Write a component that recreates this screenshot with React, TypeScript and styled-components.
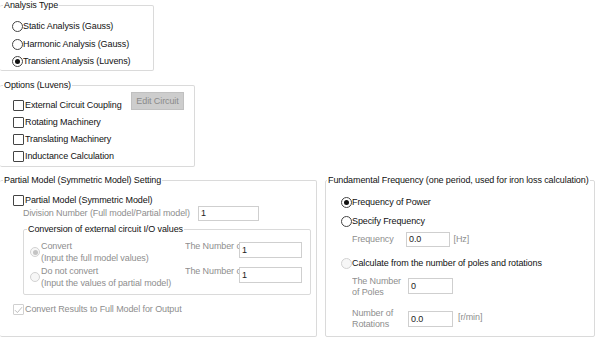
import styled, { createGlobalStyle } from "styled-components";

const GlobalStyle = createGlobalStyle`
  html, body { margin: 0; padding: 0; background: #fff; }
  body {
    font-family: "Liberation Sans", Arial, sans-serif;
    font-size: 9px;
    letter-spacing: -0.1px;
    color: #111;
  }
`;

const Page = styled.div`
  width: 597px;
  height: 338px;
  overflow: hidden;
  display: flex;
  flex-direction: column;
  align-items: flex-start;
`;

type GroupProps = { $w: number; $h: number; $noLeft?: boolean; $mt?: number; $ml?: number };
const Group = styled.fieldset<GroupProps>`
  box-sizing: border-box;
  width: ${p => p.$w}px;
  height: ${p => p.$h}px;
  margin: ${p => p.$mt ?? 0}px 0 0 ${p => p.$ml ?? 0}px;
  padding: 0;
  min-width: 0;
  border: 1px solid #dadada;
  border-left: ${p => (p.$noLeft ? "none" : "1px solid #dadada")};
  border-radius: 2px;
`;

const Legend = styled.legend<{ $ml?: number }>`
  padding: 0 1px;
  margin-left: ${p => p.$ml ?? 3}px;
  line-height: 11px;
  color: #111;
`;

type BodyProps = { $pt: number; $pl: number; $gap?: number };
const Body = styled.div<BodyProps>`
  display: flex;
  flex-direction: column;
  align-items: flex-start;
  padding: ${p => p.$pt}px 0 0 ${p => p.$pl}px;
  gap: ${p => p.$gap ?? 0}px;
`;

const Row = styled.div<{ $mt?: number; $ml?: number; $w?: number }>`
  display: flex;
  align-items: center;
  height: 11px;
  line-height: 11px;
  white-space: nowrap;
  margin: ${p => p.$mt ?? 0}px 0 0 ${p => p.$ml ?? 0}px;
  width: ${p => (p.$w ? `${p.$w}px` : "auto")};
`;

const FieldRow = styled.div<{ $mt?: number; $ml?: number; $h?: number }>`
  display: flex;
  align-items: flex-start;
  height: ${p => p.$h ?? 15}px;
  margin: ${p => p.$mt ?? 0}px 0 0 ${p => p.$ml ?? 0}px;
  white-space: nowrap;
`;

const Radio = styled.span<{ $checked?: boolean; $disabled?: boolean; $size?: number }>`
  box-sizing: border-box;
  flex-shrink: 0;
  position: relative;
  width: ${p => p.$size ?? 11}px;
  height: ${p => p.$size ?? 11}px;
  border-radius: 50%;
  border: 1px solid ${p => (p.$disabled ? "#d2d2d2" : "#444")};
  background: ${p => (p.$disabled ? "#f7f7f7" : "#fff")};
  &::after {
    content: "";
    display: ${p => (p.$checked ? "block" : "none")};
    position: absolute;
    left: 50%;
    top: 50%;
    width: 5px;
    height: 5px;
    margin: -2.5px 0 0 -2.5px;
    border-radius: 50%;
    background: ${p => (p.$disabled ? "#c4c4c4" : "#111")};
  }
`;

const Box = styled.span<{ $disabled?: boolean }>`
  box-sizing: border-box;
  flex-shrink: 0;
  width: 11px;
  height: 11px;
  margin-right: 1px;
  border: 1px solid ${p => (p.$disabled ? "#d0d0d0" : "#444")};
  border-radius: 1px;
  background: #fff;
  display: flex;
  align-items: center;
  justify-content: center;
`;

const Text = styled.span<{ $muted?: boolean }>`
  color: ${p => (p.$muted ? "#8e8e8e" : "#111")};
`;

const FieldLabel = styled.span<{ $w: number; $mt?: number; $lh?: number }>`
  display: block;
  width: ${p => p.$w}px;
  overflow: hidden;
  white-space: nowrap;
  color: #8e8e8e;
  line-height: ${p => p.$lh ?? 11}px;
  margin-top: ${p => p.$mt ?? 0}px;
`;

const Input = styled.div<{ $w: number; $h?: number; $mt?: number }>`
  box-sizing: border-box;
  width: ${p => p.$w}px;
  height: ${p => p.$h ?? 15}px;
  margin-top: ${p => p.$mt ?? 0}px;
  border: 1px solid #cfcfcf;
  background: #fff;
  padding: 0 2px;
  line-height: ${p => (p.$h ?? 15) - 2}px;
  color: #222;
`;

const Unit = styled.span<{ $ml: number; $mt: number }>`
  color: #8e8e8e;
  line-height: 11px;
  margin: ${p => p.$mt}px 0 0 ${p => p.$ml}px;
`;

const EditButton = styled.div`
  box-sizing: border-box;
  align-self: flex-start;
  margin: -7.5px 0 0 auto;
  width: 53px;
  height: 18px;
  background: #cdcdcd;
  border: 1px solid #c0c0c0;
  color: #8a8a8a;
  display: flex;
  align-items: center;
  justify-content: center;
`;

const BottomRow = styled.div`
  display: flex;
  gap: 8px;
  margin-top: 7.5px;
`;

const OptionRow = styled.div<{ $mt?: number }>`
  display: flex;
  align-items: flex-start;
  height: 24px;
  margin-top: ${p => p.$mt ?? 0}px;
  white-space: nowrap;
`;

const OptionChoice = styled.div`
  display: flex;
  align-items: center;
  width: 155px;
  height: 24px;
  gap: 1px;
`;

const TwoLine = styled.span<{ $muted?: boolean }>`
  line-height: 12px;
  color: ${p => (p.$muted ? "#8e8e8e" : "#111")};
`;

const Check = () => (
  <svg width="9" height="8" viewBox="0 0 9 8">
    <path d="M1 4.2 L3.4 6.6 L8 1.2" fill="none" stroke="#bdbdbd" strokeWidth="1" />
  </svg>
);

export default function App() {
  return (
    <>
      <GlobalStyle />
      <Page>
        <Group $w={154} $h={71} $noLeft>
          <Legend>Analysis Type</Legend>
          <Body $pt={10} $pl={12} $gap={6.7}>
            <Row>
              <Radio />
              <Text>Static Analysis (Gauss)</Text>
            </Row>
            <Row>
              <Radio />
              <Text>Harmonic Analysis (Gauss)</Text>
            </Row>
            <Row>
              <Radio $checked />
              <Text>Transient Analysis (Luvens)</Text>
            </Row>
          </Body>
        </Group>

        <Group $w={195} $h={87.5} $noLeft $mt={8.5}>
          <Legend>Options (Luvens)</Legend>
          <Body $pt={9} $pl={13} $gap={6.2}>
            <Row $w={171}>
              <Box />
              <Text>External Circuit Coupling</Text>
              <EditButton>Edit Circuit</EditButton>
            </Row>
            <Row>
              <Box />
              <Text>Rotating Machinery</Text>
            </Row>
            <Row>
              <Box />
              <Text>Translating Machinery</Text>
            </Row>
            <Row>
              <Box />
              <Text>Inductance Calculation</Text>
            </Row>
          </Body>
        </Group>

        <BottomRow>
          <Group $w={317} $h={162.5} $noLeft>
            <Legend>Partial Model (Symmetric Model) Setting</Legend>
            <Body $pt={9.5} $pl={13}>
              <Row>
                <Box />
                <Text>Partial Model (Symmetric Model)</Text>
              </Row>
              <FieldRow $ml={10}>
                <FieldLabel $w={175} $mt={2}>Division Number (Full model/Partial model)</FieldLabel>
                <Input $w={61}>1</Input>
              </FieldRow>
              <Group $w={288} $h={71.5} $mt={2.5} $ml={10}>
                <Legend>Conversion of external circuit I/O values</Legend>
                <Body $pt={5.5} $pl={6}>
                  <OptionRow>
                    <OptionChoice>
                      <Radio $checked $disabled $size={10} />
                      <TwoLine $muted>
                        Convert
                        <br />
                        (Input the full model values)
                      </TwoLine>
                    </OptionChoice>
                    <FieldLabel $w={54} $mt={0.5}>The Number of Circuits</FieldLabel>
                    <Input $w={63} $h={16} $mt={2}>1</Input>
                  </OptionRow>
                  <OptionRow $mt={1}>
                    <OptionChoice>
                      <Radio $disabled $size={10} />
                      <TwoLine $muted>
                        Do not convert
                        <br />
                        (Input the values of partial model)
                      </TwoLine>
                    </OptionChoice>
                    <FieldLabel $w={54} $mt={0.5}>The Number of Circuits</FieldLabel>
                    <Input $w={63} $h={16} $mt={1.5}>1</Input>
                  </OptionRow>
                </Body>
              </Group>
              <Row $mt={9}>
                <Box $disabled>
                  <Check />
                </Box>
                <Text $muted>Convert Results to Full Model for Output</Text>
              </Row>
            </Body>
          </Group>

          <Group $w={270} $h={162.5}>
            <Legend $ml={1}>Fundamental Frequency (one period, used for iron loss calculation)</Legend>
            <Body $pt={11} $pl={15}>
              <Row>
                <Radio $checked />
                <Text>Frequency of Power</Text>
              </Row>
              <Row $mt={8.5}>
                <Radio />
                <Text>Specify Frequency</Text>
              </Row>
              <FieldRow $mt={5} $ml={11}>
                <FieldLabel $w={54} $mt={1.5}>Frequency</FieldLabel>
                <Input $w={44}>0.0</Input>
                <Unit $ml={3.5} $mt={1.5}>[Hz]</Unit>
              </FieldRow>
              <Row $mt={10.5}>
                <Radio $disabled />
                <Text>Calculate from the number of poles and rotations</Text>
              </Row>
              <FieldRow $mt={7} $ml={11} $h={22}>
                <FieldLabel $w={56}>
                  The Number
                  <br />
                  of Poles
                </FieldLabel>
                <Input $w={45} $h={16} $mt={2.5}>0</Input>
              </FieldRow>
              <FieldRow $mt={10} $ml={11} $h={22}>
                <FieldLabel $w={56}>
                  Number of
                  <br />
                  Rotations
                </FieldLabel>
                <Input $w={45} $h={16} $mt={3.5}>0.0</Input>
                <Unit $ml={5} $mt={4}>[r/min]</Unit>
              </FieldRow>
            </Body>
          </Group>
        </BottomRow>
      </Page>
    </>
  );
}
